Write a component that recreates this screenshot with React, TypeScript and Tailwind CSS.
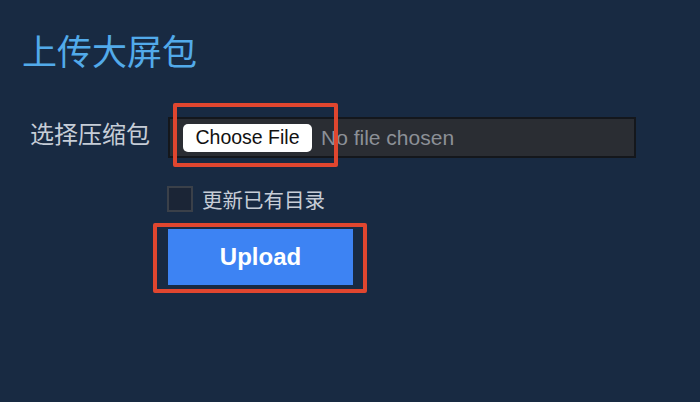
import React from "react";

const cjk = { fontFamily: '"Noto Sans CJK SC", "Noto Sans", sans-serif' };
const latin = { fontFamily: '"Liberation Sans", Arial, sans-serif' };

export default function App() {
  return (
    <div className="relative w-[700px] h-[402px] overflow-hidden bg-[#182a42]" style={cjk}>
      <h1 className="pl-[22px] pt-[30px] text-[35px] leading-[40px] text-[#52aaea]">上传大屏包</h1>

      <div className="ml-[30px] mt-[47px] flex flex-col">
        <div className="flex items-start">
          <div className="mt-[1px] w-[138px] text-[24px] leading-[30px] text-[#c6cdd7]">选择压缩包</div>
          <div className="flex h-[41px] w-[468px] items-center border-2 border-[#14171c] bg-[#2a2d33] pl-[13px]" style={latin}>
            <div className="flex h-[28px] w-[129px] items-center justify-center rounded-[5px] bg-white text-[19.5px] text-[#111]">
              Choose File
            </div>
            <span className="ml-[9px] text-[21px] text-[#8c9097]">No file chosen</span>
          </div>
        </div>

        <div className="mt-[28px] ml-[137px] flex items-center">
          <div className="h-[26px] w-[26px] border-2 border-[#3a4049] bg-[#1b2536]" />
          <span className="ml-[9px] text-[20.5px] leading-[26px] text-[#c6cdd7]">更新已有目录</span>
        </div>

        <div className="mt-[17px] ml-[138px]">
          <div
            className="flex h-[56px] w-[185px] items-center justify-center bg-[#3d83f3] text-[24px] font-bold text-white"
            style={latin}
          >
            Upload
          </div>
        </div>
      </div>

      <div className="absolute left-[173px] top-[103px] h-[64px] w-[165px] rounded-[2px] border-4 border-[#e0462f]" />
      <div className="absolute left-[153px] top-[223px] h-[70px] w-[214px] rounded-[2px] border-4 border-[#e0462f]" />
    </div>
  );
}
